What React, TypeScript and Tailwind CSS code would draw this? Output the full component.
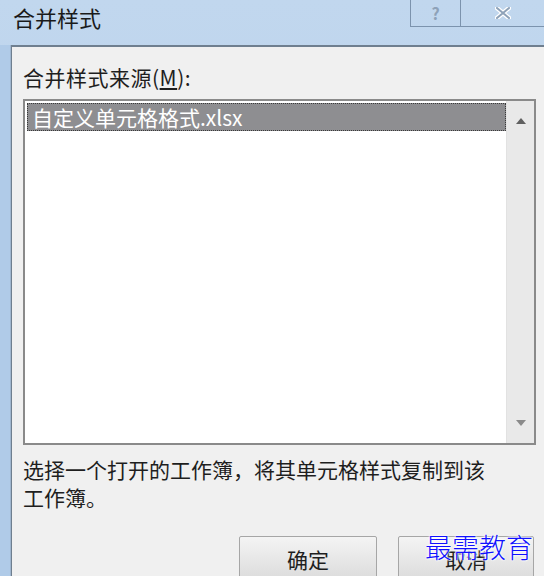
import React from "react";

export default function App() {
  const font = { fontFamily: '"Noto Sans CJK SC", "Noto Sans", sans-serif' };
  return (
    <div
      className="relative w-[544px] h-[576px] overflow-hidden bg-gradient-to-b from-[#c1d7ee] to-[#b3cde9] flex flex-col"
      style={font}
    >
      {/* Title bar */}
      <div className="h-[45px] flex items-start shrink-0">
        <div className="pl-[13px] pt-[2px] text-[22px] leading-[30px] text-[#1a1a1a]">合并样式</div>
        <div className="ml-auto flex h-[27px] border-l border-b border-[#7c93ad]">
          <div className="w-[50px] flex items-center justify-center border-r border-[#7c93ad] text-[16px] text-[#8ea2b8] font-bold">?</div>
          <div className="w-[83px] flex items-center justify-center">
            <svg width="16" height="12" viewBox="0 0 16 12">
              <path d="M2 1 L14 11 M14 1 L2 11" stroke="#ffffff" strokeWidth="4.5" strokeLinecap="round" />
              <path d="M2 1 L14 11 M14 1 L2 11" stroke="#8ea2b8" strokeWidth="2" strokeLinecap="round" />
            </svg>
          </div>
        </div>
      </div>
      {/* Frame + body */}
      <div className="flex-1 flex">
        <div className="w-[11px] shrink-0 bg-[#b0cbe8] border-r border-[#9fb6cf]"></div>
        <div className="flex-1 flex flex-col bg-[#f0f0f0] border-t-2 border-l border-[#6f7f8f] pl-[11px] pr-[8px]">
          <div className="pt-[16px] text-[21px] leading-[28px] text-[#1e1e1e] tracking-[0.5px]">
            合并样式来源(<span className="underline underline-offset-2">M</span>):
          </div>
          <div className="mt-[8px] h-[346px] w-[513px] border-[2px] border-[#8a8a8a] bg-white flex">
            <div className="flex-1 pl-[2px] pt-[2px]">
              <div className="h-[28px] bg-[#8e8e91] border border-dotted border-[#3a3a3a] text-white text-[21px] leading-[26px] pl-[4px] whitespace-nowrap overflow-hidden">
                自定义单元格格式.xlsx
              </div>
            </div>
            <div className="w-[28px] bg-[#e9e9e9] border-l border-[#e2e2e2] flex flex-col items-center justify-between py-[16px]">
              <svg width="12" height="8" viewBox="0 0 12 8"><path d="M1 7 L6 1 L11 7 Z" fill="#606060" /></svg>
              <svg width="12" height="8" viewBox="0 0 12 8"><path d="M1 1 L11 1 L6 7 Z" fill="#8a8a8a" /></svg>
            </div>
          </div>
          <div className="mt-[10px] text-[21px] leading-[28px] text-[#1e1e1e] whitespace-nowrap">
            选择一个打开的工作簿，将其单元格样式复制到该
            <br />
            工作簿。
          </div>
          <div className="mt-[25px] flex justify-end gap-[21px] pr-[2px]">
            <div className="w-[138px] h-[44px] border border-[#a6a6a6] rounded-[2px] bg-gradient-to-b from-[#f4f4f4] to-[#dcdcdc] flex items-start justify-center pt-[8px] text-[21px] leading-[28px] text-[#1e1e1e]">
              确定
            </div>
            <div className="w-[136px] h-[44px] border border-[#a6a6a6] rounded-[2px] bg-gradient-to-b from-[#f4f4f4] to-[#dcdcdc] flex items-start justify-center pt-[8px] text-[21px] leading-[28px] text-[#1e1e1e]">
              取消
            </div>
          </div>
        </div>
      </div>
      {/* Watermark */}
      <div
        className="absolute left-[425px] top-[529px] text-[27px] leading-[36px] text-[#1010ff] whitespace-nowrap [text-shadow:0_0_2px_#fff,0_0_2px_#fff,0_0_3px_#fff]"
        style={{ fontFamily: '"Noto Sans CJK SC", serif', fontWeight: 300 }}
      >
        最需教育
      </div>
    </div>
  );
}
